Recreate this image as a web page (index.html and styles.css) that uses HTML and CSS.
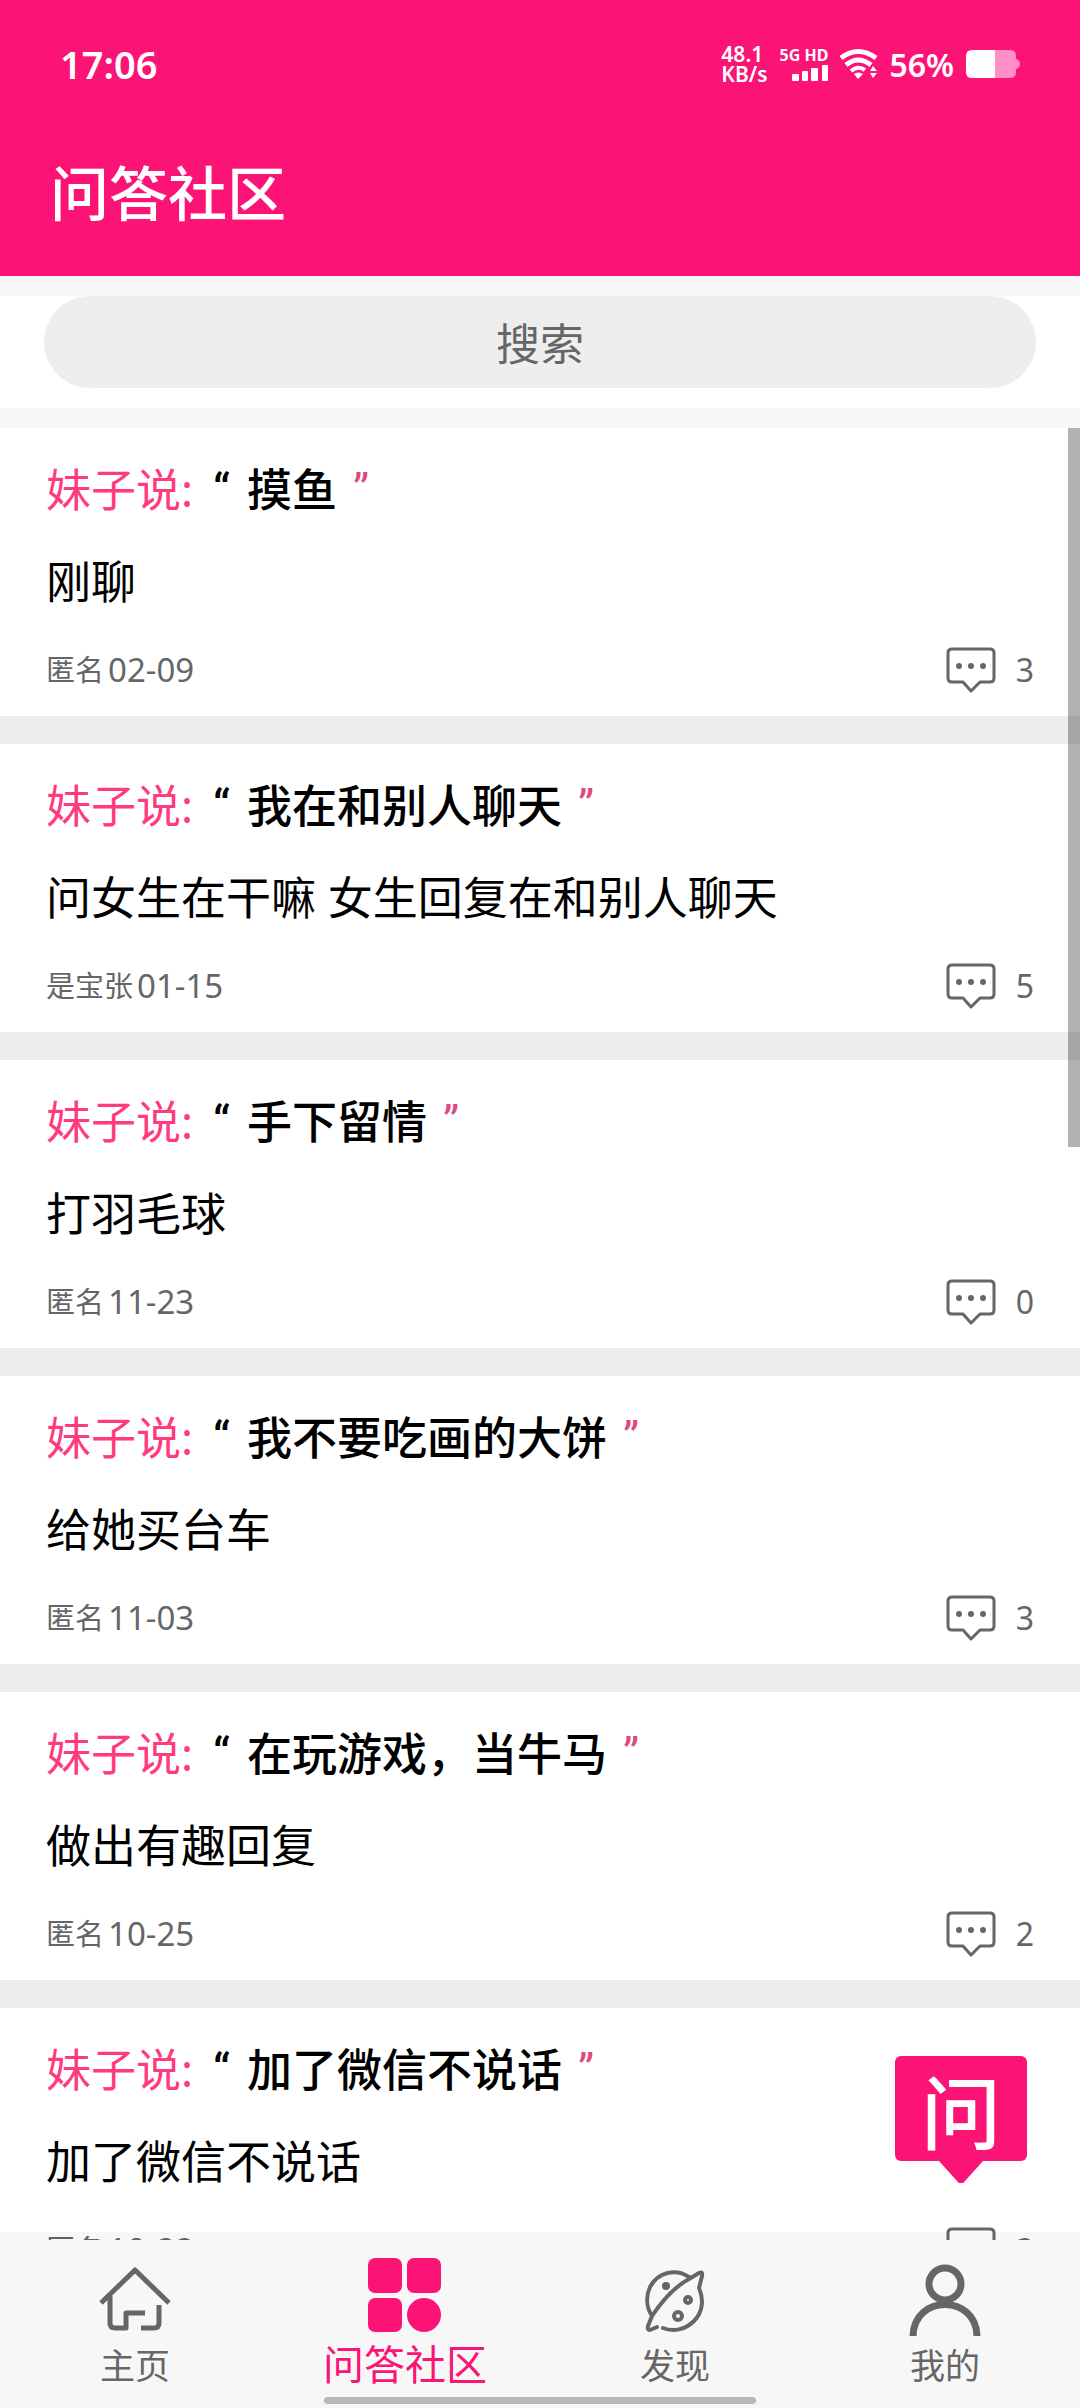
FILE: index.html
```html
<!DOCTYPE html>
<html lang="zh-CN">
<head>
<meta charset="utf-8">
<meta name="viewport" content="width=device-width">
<title>问答社区</title>
<link rel="stylesheet" href="styles.css">
</head>
<body>
<svg class="sprite" aria-hidden="true">
  <symbol id="bubble" viewBox="0 0 50 46">
    <path d="M6 2H44Q48 2 48 6V31Q48 35 44 35H34L25 44L17 35H6Q2 35 2 31V6Q2 2 6 2Z" fill="none" stroke="#666" stroke-width="3" stroke-linejoin="round"/>
    <circle cx="13" cy="19" r="3"/><circle cx="25" cy="19" r="3"/><circle cx="37" cy="19" r="3"/>
  </symbol>
</svg>
<header class="header">
  <div class="status">
    <span class="clock">17:06</span>
    <div class="indicators">
      <div class="speed"><span>48.1</span><span>KB/s</span></div>
      <div class="cell">
        <span>5G HD</span>
        <svg width="36" height="16" viewBox="0 0 36 16" fill="#fff"><rect x="0" y="9" width="7" height="7" rx="1"/><rect x="10" y="6" width="6" height="10" rx="1"/><rect x="19" y="3" width="7" height="13" rx="1"/><rect x="30" y="0" width="6" height="16" rx="1"/></svg>
      </div>
      <svg width="37" height="30" viewBox="0 0 37 30" fill="none" stroke="#fff" stroke-width="5"><path d="M1 9Q18 -4 36 9M6 16Q18 6 31 16"/><path d="M11 22Q18 16 25 21" stroke-width="4"/><path d="M14 25Q18 22 23 25L18 30Z" fill="#fff" stroke="none"/><path d="M30 22L33 17L37 22ZM30 24H37L33 29Z" fill="#fff" stroke="none"/></svg>
      <span class="percent">56%</span>
      <svg width="54" height="28" viewBox="0 0 54 28"><path d="M29 0H44Q50 0 50 6V9Q54 10 54 14T50 19V22Q50 28 44 28H29Z" fill="#ff8fc6"/><path d="M6 0H29V28H6Q0 28 0 22V6Q0 0 6 0Z" fill="#fff"/></svg>
    </div>
  </div>
  <h1 class="title">问答社区</h1>
</header>
<form class="search"><input class="search-box" type="search" placeholder="搜索" aria-label="搜索"></form>
<main class="feed">
  <div class="scroll-thumb"></div>
  <article class="card">
    <h2 class="quote"><span class="who">妹子说:</span><span class="open">“</span><span>摸鱼</span><span class="close">”</span></h2>
    <p class="text">刚聊</p>
    <div class="meta"><span>匿名</span><time>02-09</time><span class="replies"><svg class="bubble"><use href="#bubble"/></svg>3</span></div>
  </article>
  <article class="card">
    <h2 class="quote"><span class="who">妹子说:</span><span class="open">“</span><span>我在和别人聊天</span><span class="close">”</span></h2>
    <p class="text">问女生在干嘛 女生回复在和别人聊天</p>
    <div class="meta"><span>是宝张</span><time>01-15</time><span class="replies"><svg class="bubble"><use href="#bubble"/></svg>5</span></div>
  </article>
  <article class="card">
    <h2 class="quote"><span class="who">妹子说:</span><span class="open">“</span><span>手下留情</span><span class="close">”</span></h2>
    <p class="text">打羽毛球</p>
    <div class="meta"><span>匿名</span><time>11-23</time><span class="replies"><svg class="bubble"><use href="#bubble"/></svg>0</span></div>
  </article>
  <article class="card">
    <h2 class="quote"><span class="who">妹子说:</span><span class="open">“</span><span>我不要吃画的大饼</span><span class="close">”</span></h2>
    <p class="text">给她买台车</p>
    <div class="meta"><span>匿名</span><time>11-03</time><span class="replies"><svg class="bubble"><use href="#bubble"/></svg>3</span></div>
  </article>
  <article class="card">
    <h2 class="quote"><span class="who">妹子说:</span><span class="open">“</span><span>在玩游戏，当牛马</span><span class="close">”</span></h2>
    <p class="text">做出有趣回复</p>
    <div class="meta"><span>匿名</span><time>10-25</time><span class="replies"><svg class="bubble"><use href="#bubble"/></svg>2</span></div>
  </article>
  <article class="card">
    <h2 class="quote"><span class="who">妹子说:</span><span class="open">“</span><span>加了微信不说话</span><span class="close">”</span></h2>
    <p class="text">加了微信不说话</p>
    <div class="meta"><span>匿名</span><time>10-22</time><span class="replies"><svg class="bubble"><use href="#bubble"/></svg>2</span></div>
  </article>
  <button class="ask" type="button">问</button>
</main>
<nav class="tabs">
  <a class="tab" href="#home">
    <svg width="72" height="80" viewBox="0 0 72 80" fill="none" stroke="#666" stroke-width="5" stroke-linejoin="round"><path d="M2 51L36 18L70 51M11 44V71Q11 76 16 76H27V61H46M42 76H55Q60 76 60 71V53"/></svg>
    <span>主页</span>
  </a>
  <a class="tab active" href="#community" aria-current="page">
    <svg width="74" height="80" viewBox="0 0 74 80" fill="#fb1375"><rect x="0" y="6" width="34" height="35" rx="7"/><rect x="39" y="6" width="34" height="35" rx="7"/><rect x="0" y="46" width="34" height="34" rx="7"/><circle cx="56" cy="63" r="17"/></svg>
    <span>问答社区</span>
  </a>
  <a class="tab" href="#discover">
    <svg width="60" height="80" viewBox="0 0 60 80" fill="none" stroke="#666" stroke-width="4" stroke-linecap="round" stroke-linejoin="round"><path d="M44 25C31 16 13 20 5 35C1 44 1 55 7 64M54 36C59 47 58 60 49 69C40 78 28 80 18 76M12 75L5 78Q2 78 3 74L7 64C17 49 31 34 44 27L54 21Q58 19 57 24L54 36"/><circle cx="21" cy="34" r="2"/><circle cx="43" cy="48" r="3"/><circle cx="33" cy="64" r="4"/></svg>
    <span>发现</span>
  </a>
  <a class="tab" href="#me">
    <svg width="74" height="80" viewBox="0 0 74 80" fill="none" stroke="#666" stroke-width="7"><circle cx="37" cy="32" r="16"/><path d="M5 84C6 42 68 42 69 84"/></svg>
    <span>我的</span>
  </a>
  <div class="gesture-bar"></div>
</nav>
</body>
</html>
```
FILE: styles.css
```css
* { box-sizing: border-box; margin: 0; padding: 0; }

body {
  display: flex;
  flex-direction: column;
  height: 100vh;
  overflow: hidden;
  background: #f7f7f7;
  color: #000;
  font-family: "Noto Sans", "Noto Sans CJK SC", sans-serif;
}

.sprite { position: absolute; width: 0; height: 0; }

svg { display: block; flex: none; overflow: visible; }

/* Header */
.header {
  flex: none;
  padding: 0 60px 40px 50px;
  background: #fb1375;
  color: #fff;
}

.status {
  display: flex;
  align-items: center;
  justify-content: space-between;
  height: 128px;
  padding-left: 10px;
}

.clock { font-size: 38px; font-weight: 600; }

.indicators { display: flex; align-items: center; gap: 12px; }

.speed {
  display: flex;
  flex-direction: column;
  font-size: 21px;
  font-weight: 600;
  line-height: 20px;
}

.cell {
  display: flex;
  flex-direction: column;
  align-items: flex-end;
  gap: 2px;
  font-size: 16px;
  font-weight: 700;
  line-height: 16px;
}

.percent { font-size: 32px; font-weight: 600; }

.title {
  padding-top: 18px;
  font-family: "Noto Sans CJK SC", sans-serif;
  font-size: 59px;
  font-weight: 500;
  line-height: 90px;
}

/* Search */
.search {
  flex: none;
  margin: 20px 0;
  padding: 0 44px 20px;
  background: #fff;
}

.search-box {
  display: block;
  width: 100%;
  height: 92px;
  border: 0;
  border-radius: 46px;
  background: #eee;
  font: 44px "Noto Sans CJK SC", sans-serif;
  text-align: center;
}

.search-box::placeholder { color: #666; opacity: 1; }
.search-box::-webkit-search-cancel-button { display: none; }

/* Feed */
.feed {
  position: relative;
  flex: 1;
  min-height: 0;
  overflow: hidden;
  background: #fff;
}

.scroll-thumb {
  position: absolute;
  top: 0;
  right: 0;
  width: 12px;
  height: 39.7%;
  background: rgba(0, 0, 0, 0.3);
}

.card {
  padding: 32px 46px 16px;
  border-bottom: 28px solid #ededed;
}

.quote {
  display: flex;
  gap: 16px;
  font-size: 45px;
  font-weight: 500;
  line-height: 60px;
}

.who { color: #ff3b80; font-weight: 400; }

.open,
.close {
  width: 18px;
  font-family: Roboto, sans-serif;
}

.open { margin-left: 4px; }
.close { color: #e0487f; font-weight: 400; }

.text {
  margin-top: 32px;
  font-size: 45px;
  line-height: 60px;
}

.meta {
  display: flex;
  align-items: center;
  gap: 4px;
  height: 60px;
  margin-top: 28px;
  color: #666;
  font-size: 29px;
  line-height: 60px;
}

.meta time { font-size: 33px; }

.replies {
  display: flex;
  align-items: center;
  gap: 20px;
  margin-left: auto;
  font-size: 32px;
}

.bubble { width: 50px; height: 46px; fill: #666; }

.ask {
  position: absolute;
  right: 53px;
  bottom: 79px;
  width: 132px;
  height: 105px;
  border: 0;
  border-radius: 6px;
  background: #fb1375;
  color: #fff;
  font: 500 80px/105px "Noto Sans CJK SC", sans-serif;
}

.ask::after {
  content: "";
  position: absolute;
  top: 100%;
  left: 50%;
  width: 44px;
  height: 22px;
  margin-left: -22px;
  background: #fb1375;
  clip-path: polygon(0 0, 100% 0, 55% 100%, 45% 100%);
}

/* Tab bar */
.tabs {
  position: relative;
  display: flex;
  flex: none;
  height: 168px;
  padding-top: 12px;
  background: #f7f7f7;
  box-shadow: 0 -8px 0 rgba(0, 0, 0, 0.03);
}

.tab {
  display: flex;
  flex: 1;
  flex-direction: column;
  align-items: center;
  color: #666;
  font-family: "Noto Sans CJK SC", sans-serif;
  font-size: 35px;
  line-height: 64px;
  text-decoration: none;
}

.tab.active { color: #fb1375; font-size: 41px; line-height: 60px; }

.gesture-bar {
  position: absolute;
  bottom: 4px;
  left: 30%;
  width: 40%;
  height: 7px;
  border-radius: 4px;
  background: #b8b8b8;
}
```
